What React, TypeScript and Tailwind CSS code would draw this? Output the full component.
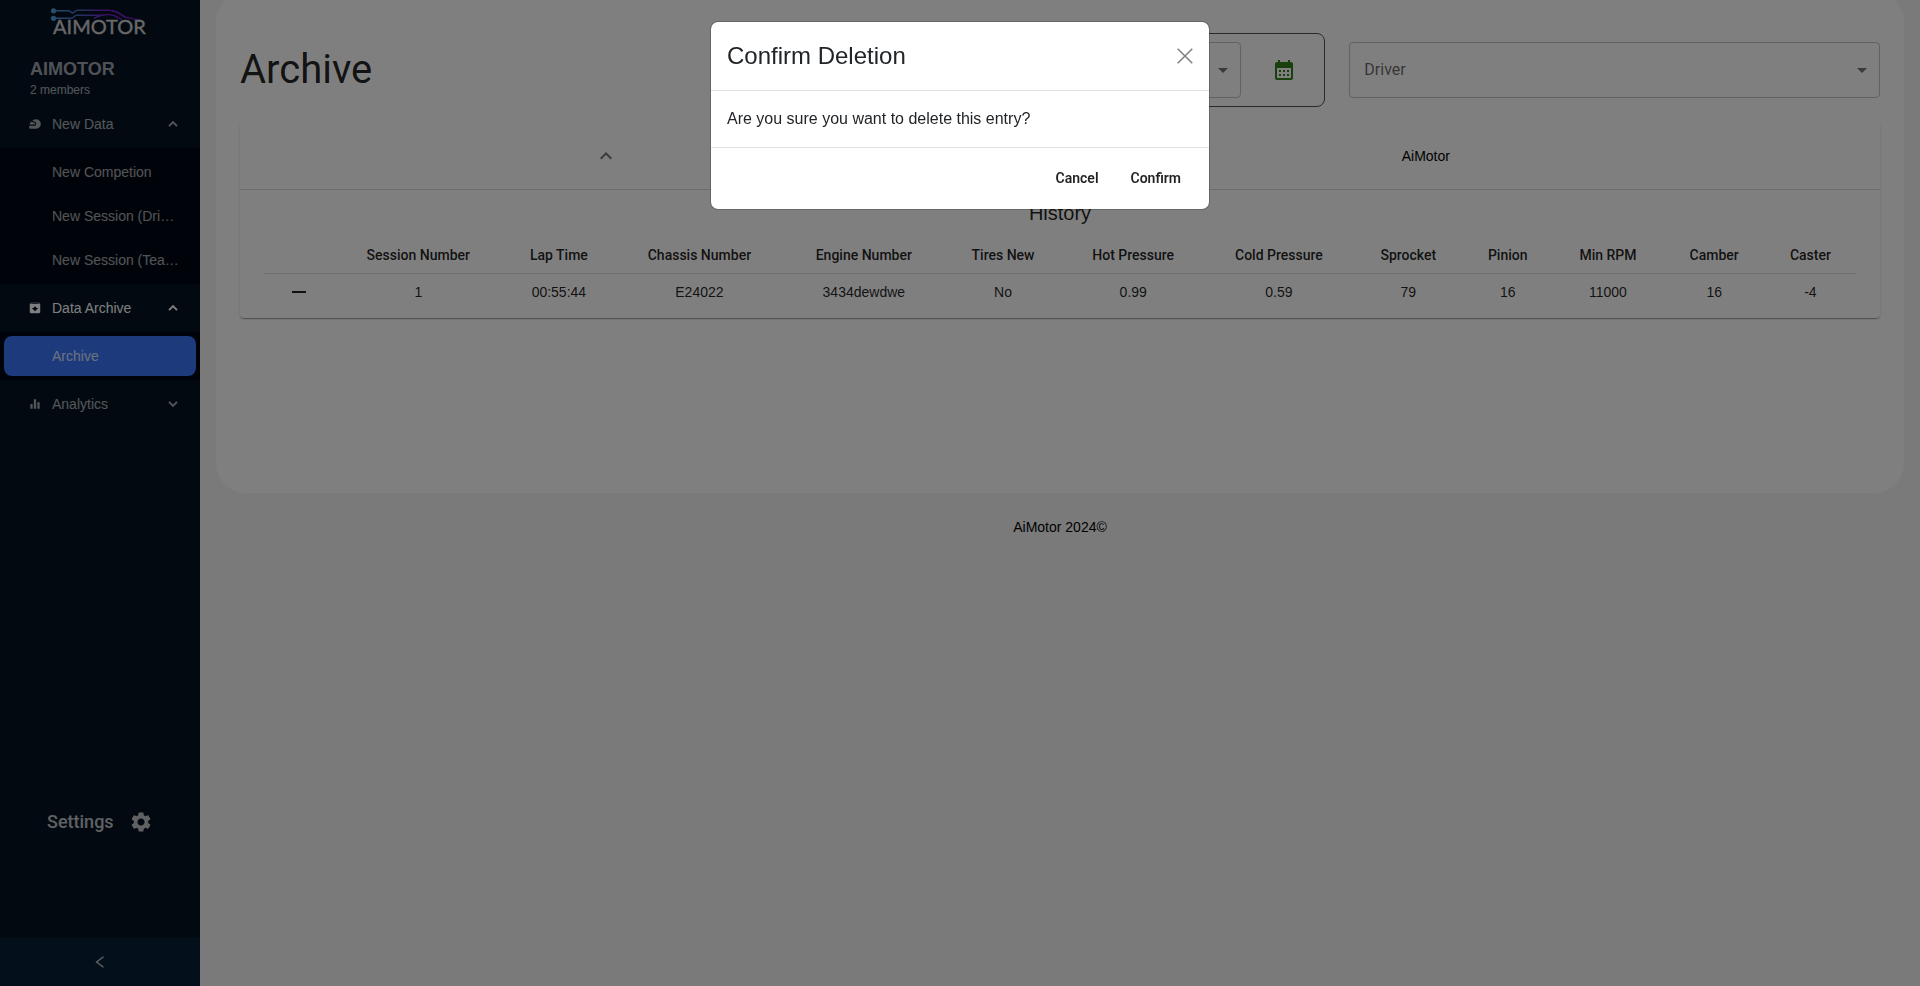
import { useState } from "react";
import type { ReactNode } from "react";
import {
  MdArchive,
  MdArrowDropDown,
  MdCalendarMonth,
  MdEqualizer,
  MdKeyboardArrowUp,
  MdRemove,
  MdSettings,
  MdSportsMotorsports,
} from "react-icons/md";

const columns = [
  "Session Number",
  "Lap Time",
  "Chassis Number",
  "Engine Number",
  "Tires New",
  "Hot Pressure",
  "Cold Pressure",
  "Sprocket",
  "Pinion",
  "Min RPM",
  "Camber",
  "Caster",
];

const sessions = [
  ["1", "00:55:44", "E24022", "3434dewdwe", "No", "0.99", "0.59", "79", "16", "11000", "16", "-4"],
];

function Logo() {
  return (
    <svg viewBox="0 0 100 36" className="h-9 w-[100px]" aria-label="AiMotor">
      <defs>
        <linearGradient id="trace" gradientUnits="userSpaceOnUse" x1="0" x2="92" y1="0" y2="0">
          <stop offset="0" stopColor="#4f9fd8" />
          <stop offset="0.35" stopColor="#4a60c0" />
          <stop offset="0.6" stopColor="#7a1fc8" />
          <stop offset="1" stopColor="#6a14b4" />
        </linearGradient>
      </defs>
      <g fill="none" stroke="url(#trace)" strokeWidth="1.4">
        <path d="M4 4.800h15l3.500 2.400 4.500-3h31c8 0 11 3 15 6 4 2.500 10 2 18 3.800" />
        <path d="M4 12.300h18l4-3h26" />
        <path d="M44 12.500c5-3.500 13-5 20-3l8 4M62 5c5 0 9 3 14 6.500" />
      </g>
      <circle cx="3.500" cy="4.800" r="2.600" fill="#4f9fd8" />
      <circle cx="3.500" cy="12.300" r="2.600" fill="#4f9fd8" />
      <text x="3" y="28" fontSize="20" fontFamily="Lato, sans-serif" fill="#d0d0d0" stroke="#d0d0d0" strokeWidth="0.4">
        AIMOTOR
      </text>
    </svg>
  );
}

function Chevron({ open }: { open?: boolean }) {
  return (
    <svg viewBox="0 0 10 10" className={`size-[10px] ${open ? "" : "rotate-180"}`} aria-hidden="true">
      <path d="M1 7.200 5 3.200 9 7.200" fill="none" stroke="currentColor" strokeWidth="1.900" />
    </svg>
  );
}

type GroupProps = { icon: ReactNode; title: string; open?: boolean; selected?: boolean; children?: ReactNode };

function MenuGroup({ icon, title, open, selected, children }: GroupProps) {
  return (
    <li>
      <button
        type="button"
        aria-expanded={!!open}
        className={`my-1 flex h-10 w-full items-center pr-[22px] pl-7 text-left ${selected ? "text-white" : "text-white/65"}`}
      >
        {icon}
        <span className="ml-[10px] flex-1">{title}</span>
        <Chevron open={open} />
      </button>
      {children && <ul className="flex flex-col gap-1 bg-[#000612] py-1">{children}</ul>}
    </li>
  );
}

function MenuItem({ title, active }: { title: string; active?: boolean }) {
  return (
    <li className="px-1">
      <a
        href="#"
        className={`block h-10 truncate rounded-lg pr-4 pl-12 leading-10 ${active ? "bg-[#3a74fa] text-white/80" : "text-white/65"}`}
      >
        {title}
      </a>
    </li>
  );
}

function Sidebar() {
  return (
    <aside className="flex w-[200px] shrink-0 flex-col bg-[#041222]">
      <div className="flex justify-center pt-[6px]">
        <Logo />
      </div>
      <div className="pt-4 pl-[30px] text-white/65">
        <p className="text-lg leading-[22px] font-bold text-[#a0a4ac]">AIMOTOR</p>
        <p className="text-xs leading-5">2 members</p>
      </div>
      <nav className="text-sm">
        <ul>
          <MenuGroup icon={<MdSportsMotorsports size={14} />} title="New Data" open>
            <MenuItem title="New Competion" />
            <MenuItem title="New Session (Driver)" />
            <MenuItem title="New Session (Team)" />
          </MenuGroup>
          <MenuGroup icon={<MdArchive size={14} />} title="Data Archive" open selected>
            <MenuItem title="Archive" active />
          </MenuGroup>
          <MenuGroup icon={<MdEqualizer size={14} />} title="Analytics" />
        </ul>
      </nav>
      <a
        href="#"
        className="mt-auto mb-[102px] flex items-center gap-[15px] pl-[47px] font-[Roboto,sans-serif] text-lg leading-7 font-medium text-white/75"
      >
        Settings
        <MdSettings size={24} />
      </a>
      <button
        type="button"
        aria-label="Collapse menu"
        className="flex h-12 items-center justify-center bg-[#062038] text-white/80"
      >
        <svg viewBox="0 0 12 12" className="size-3" aria-hidden="true">
          <path d="M9.500 0.800 2.500 6l7 5.200" fill="none" stroke="currentColor" strokeWidth="1.200" />
        </svg>
      </button>
    </aside>
  );
}

function SelectBox({ label, children }: { label: string; children?: ReactNode }) {
  return (
    <div className="relative flex-1">
      <select
        aria-label={label}
        className="h-14 w-full appearance-none rounded border border-black/23 pr-8 pl-[14px] font-[Roboto,sans-serif] text-black/60"
      >
        {children}
      </select>
      <MdArrowDropDown size={24} className="pointer-events-none absolute top-4 right-[6px] text-black/54" />
    </div>
  );
}

function Filters() {
  return (
    <div className="grid grid-cols-3 items-center gap-6">
      <h1 className="font-[Roboto,sans-serif] text-[40px] leading-12 text-black/87">Archive</h1>
      <div className="flex items-center rounded-lg border border-[#555] p-2">
        <SelectBox label="Date" />
        <button type="button" aria-label="Pick a date" className="pr-5 pl-[31px] text-[#33801a]">
          <MdCalendarMonth size={24} />
        </button>
      </div>
      <SelectBox label="Driver">
        <option>Driver</option>
      </SelectBox>
    </div>
  );
}

function HistoryTable() {
  return (
    <table className="w-full text-center text-sm text-black/87">
      <thead>
        <tr className="border-b border-black/12 font-[Roboto,sans-serif]">
          <th className="px-4">
            <span className="block w-6" />
          </th>
          {columns.map((name) => (
            <th key={name} className="px-4 py-[6px] leading-6 font-medium whitespace-nowrap">
              {name}
            </th>
          ))}
        </tr>
      </thead>
      <tbody>
        {sessions.map((row) => (
          <tr key={row[0]}>
            <td>
              <button type="button" aria-label="Delete entry" className="align-middle">
                <MdRemove size={24} />
              </button>
            </td>
            {row.map((value, i) => (
              <td key={columns[i]} className="py-[6px] leading-6">
                {value}
              </td>
            ))}
          </tr>
        ))}
      </tbody>
    </table>
  );
}

function ConfirmDialog({ onClose }: { onClose: () => void }) {
  return (
    <div className="fixed inset-0 bg-black/50 px-4 pt-[21px]">
      <div
        role="dialog"
        aria-modal="true"
        aria-labelledby="confirm-title"
        className="mx-auto max-w-[500px] rounded-lg border border-black/20 bg-white bg-clip-padding text-[#212529]"
      >
        <div className="flex items-center justify-between border-b border-[#dee2e6] p-4">
          <h2 id="confirm-title" className="text-2xl leading-9">
            Confirm Deletion
          </h2>
          <button type="button" aria-label="Close" onClick={onClose} className="text-black/50">
            <svg viewBox="0 0 16 16" className="size-4" aria-hidden="true">
              <path d="M0.700 0.700 15.300 15.300M15.300 0.700 0.700 15.300" fill="none" stroke="currentColor" strokeWidth="1.500" />
            </svg>
          </button>
        </div>
        <p className="border-b border-[#dee2e6] p-4 leading-6">Are you sure you want to delete this entry?</p>
        <div className="flex justify-end px-3 pt-3 pb-[13px] font-[Roboto,sans-serif] text-sm leading-6 font-semibold text-black/87">
          <button type="button" onClick={onClose} className="px-4 py-[6px]">
            Cancel
          </button>
          <button type="button" onClick={onClose} className="px-4 py-[6px]">
            Confirm
          </button>
        </div>
      </div>
    </div>
  );
}

export default function App() {
  const [confirming, setConfirming] = useState(true);

  return (
    <div className="flex min-h-screen bg-[#f5f5f5] font-['Liberation_Sans',Arial,sans-serif]">
      <Sidebar />
      <main className="min-w-0 flex-1 px-4">
        <section className="-mt-2 min-h-[501px] rounded-[30px] bg-white px-6 pt-[41px]">
          <Filters />
          <div className="mt-4 rounded bg-white shadow-[0_2px_1px_-1px_rgba(0,0,0,0.2),0_1px_1px_0_rgba(0,0,0,0.14),0_1px_3px_0_rgba(0,0,0,0.12)]">
            <div className="grid h-[67px] grid-cols-[29fr_36fr] items-center border-b border-black/15 text-center text-sm text-black">
              <div>
                <button type="button" aria-label="Collapse history" className="align-middle text-black/54">
                  <MdKeyboardArrowUp size={24} />
                </button>
              </div>
              <div>AiMotor</div>
            </div>
            <div className="px-6 pt-[7px] pb-2">
              <h2 className="mb-2 text-center text-xl leading-8 text-black/87">History</h2>
              <HistoryTable />
            </div>
          </div>
        </section>
        <footer className="py-6 text-center text-sm leading-5 text-black">AiMotor 2024©</footer>
      </main>
      {confirming && <ConfirmDialog onClose={() => setConfirming(false)} />}
    </div>
  );
}
